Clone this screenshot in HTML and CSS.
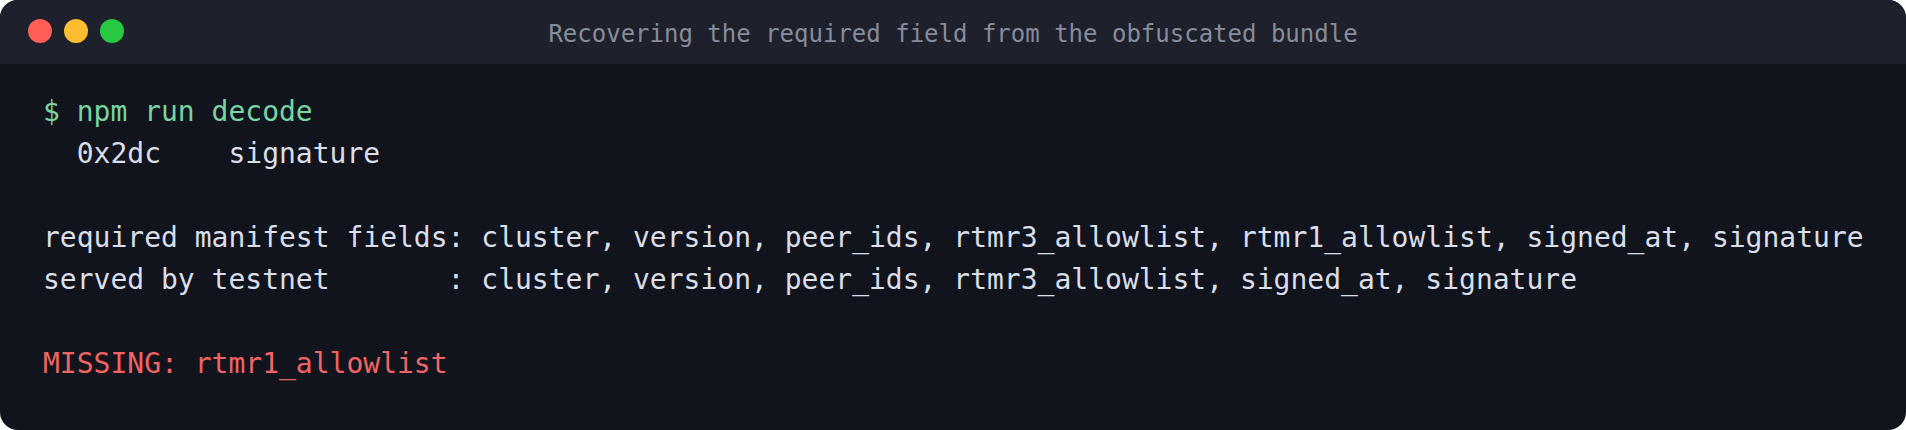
FILE: index.html
```html
<!DOCTYPE html>
<html lang="en">
<head>
<meta charset="utf-8">
<title>Terminal</title>
<link rel="stylesheet" href="styles.css">
</head>
<body>
<div class="window">
  <div class="titlebar">
    <div class="lights">
      <span class="light red"></span>
      <span class="light yellow"></span>
      <span class="light green"></span>
    </div>
    <div class="title">Recovering the required field from the obfuscated bundle</div>
  </div>
  <pre class="term"><span class="prompt">$ npm run decode</span>
  0x2dc    signature

required manifest fields: cluster, version, peer_ids, rtmr3_allowlist, rtmr1_allowlist, signed_at, signature
served by testnet       : cluster, version, peer_ids, rtmr3_allowlist, signed_at, signature

<span class="missing">MISSING: rtmr1_allowlist</span></pre>
</div>
</body>
</html>
```
FILE: styles.css
```css
html, body {
  margin: 0;
  padding: 0;
  background: #ffffff;
}
body {
  width: 1906px;
  height: 430px;
  overflow: hidden;
}
.window {
  width: 1906px;
  height: 430px;
  background: #11141c;
  border-radius: 18px;
  overflow: hidden;
  display: flex;
  flex-direction: column;
  font-family: "DejaVu Sans Mono", monospace;
}
.titlebar {
  height: 64px;
  flex: none;
  background: #1e202b;
  position: relative;
  display: flex;
  align-items: center;
  justify-content: center;
}
.lights {
  position: absolute;
  left: 28px;
  top: 19px;
  display: flex;
  gap: 12px;
}
.light {
  width: 24px;
  height: 24px;
  border-radius: 50%;
  display: block;
}
.red { background: #ff5f57; }
.yellow { background: #febc2e; }
.green { background: #28c840; }
.title {
  font-size: 24px;
  color: #878c9c;
  margin-top: 4px;
}
.term {
  margin: 0;
  padding: 27px 43px 0 43px;
  font-family: "DejaVu Sans Mono", monospace;
  font-size: 28px;
  line-height: 42px;
  color: #dadee8;
  white-space: pre;
}
.prompt { color: #78d4a0; }
.missing { color: #f26464; }
```
